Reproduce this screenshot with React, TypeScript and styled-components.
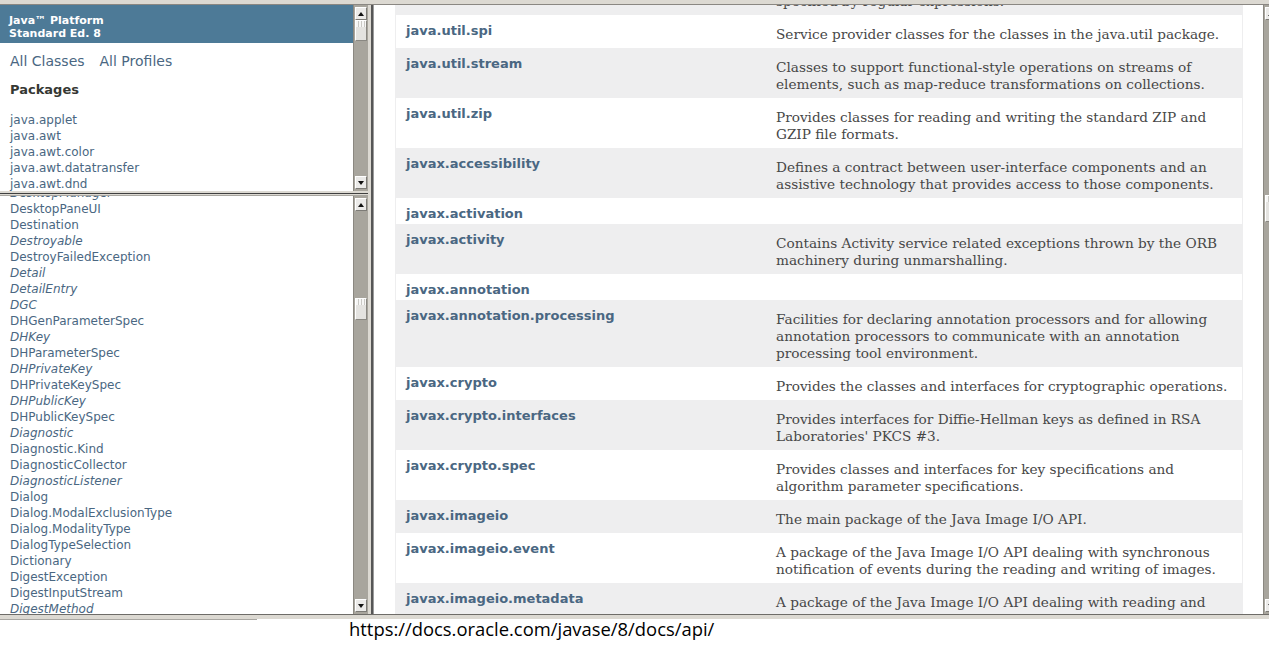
import React from "react";
import styled, { createGlobalStyle } from "styled-components";

const GlobalStyle = createGlobalStyle`
  html, body { margin: 0; padding: 0; background: #ffffff; }
  body { width: 1269px; height: 650px; overflow: hidden; font-family: "DejaVu Sans", sans-serif; }
  #root { width: 1269px; height: 650px; }
`;

const Page = styled.div`
  width: 1269px;
  height: 650px;
  overflow: hidden;
  background: #ffffff;
`;

const Window = styled.div`
  width: 1278px;
  display: flex;
  flex-direction: column;
  background: #dcd9d2;
`;

const TopEdge = styled.div`
  height: 5px;
  background: linear-gradient(to bottom, #dcd9d2 0 4px, #8a8782 4px 5px);
`;

const BottomEdge = styled.div`
  height: 5px;
  background: linear-gradient(to bottom, #6e6c68 0 1px, #dcd9d2 1px 5px);
`;

const Frames = styled.div`
  display: flex;
  height: 609px;
`;

const LeftColumn = styled.div`
  width: 368px;
  flex: none;
  display: flex;
  flex-direction: column;
`;

const Frame = styled.div<{ $h?: number }>`
  display: flex;
  min-height: 0;
  min-width: 0;
  background: #ffffff;
  ${(p) => (p.$h ? `height: ${p.$h}px; flex: none;` : `flex: 1;`)}
`;

const FrameBody = styled.div`
  flex: 1;
  min-width: 0;
  overflow: hidden;
`;

const HSplit = styled.div`
  height: 5px;
  flex: none;
  background: linear-gradient(
    to bottom,
    #dcd9d2 0 2px,
    #3f3f3f 2px 3px,
    #dcd9d2 3px 4px,
    #a8a6a0 4px 5px
  );
`;

const VSplit = styled.div`
  width: 6px;
  flex: none;
  background: linear-gradient(to right, #dcd9d2 0 3px, #565656 3px 5px, #9c9c9c 5px 6px);
`;

/* ---------- scrollbars ---------- */

const Track = styled.div`
  width: 15px;
  flex: none;
  box-sizing: border-box;
  display: flex;
  flex-direction: column;
  padding: 2px 1px;
  background: #a8a59d;
  border-left: 1px solid #8b8881;
`;

const ArrowButton = styled.div`
  height: 13px;
  flex: none;
  box-sizing: border-box;
  display: flex;
  align-items: center;
  justify-content: center;
  background: #ebeae8;
  border: 1px solid;
  border-color: #ffffff #7d7b76 #7d7b76 #ffffff;
`;

const Arrow = styled.span<{ $dir: "up" | "down" }>`
  width: 0;
  height: 0;
  border-left: 3px solid transparent;
  border-right: 3px solid transparent;
  ${(p) =>
    p.$dir === "up"
      ? `border-bottom: 4px solid #111;`
      : `border-top: 4px solid #111;`}
`;

const Thumb = styled.div<{ $offset: number; $size: number }>`
  flex: none;
  box-sizing: border-box;
  margin-top: ${(p) => p.$offset}px;
  height: ${(p) => p.$size}px;
  border: 1px solid;
  border-color: #ffffff #8a8882 #8a8882 #ffffff;
  background:
    repeating-linear-gradient(to right, #f6f6f5 0 2px, #c9c8c4 2px 3px) top / 100% 6px no-repeat,
    #e4e3e0;
`;

const TrackFill = styled.div`
  flex: 1;
`;

function Scrollbar({ offset, size }: { offset: number; size: number }) {
  return (
    <Track>
      <ArrowButton>
        <Arrow $dir="up" />
      </ArrowButton>
      <Thumb $offset={offset} $size={size} />
      <TrackFill />
      <ArrowButton>
        <Arrow $dir="down" />
      </ArrowButton>
    </Track>
  );
}

/* ---------- left frames ---------- */

const Bar = styled.div`
  background: #4d7a97;
  color: #ffffff;
  font-family: "DejaVu Sans", sans-serif;
  font-weight: bold;
  font-size: 11px;
  line-height: 13px;
  padding: 9px 5px 3px 9px;
`;

const IndexHeader = styled.div`
  margin: 10px 10px 0 10px;
  font-size: 14px;
  line-height: 17px;
  display: flex;
  gap: 15px;
`;

const Link = styled.a`
  color: #4a6782;
  text-decoration: none;
`;

const IndexTitle = styled.h2`
  margin: 12px 10px 0 10px;
  padding: 0 0 3px 0;
  font-size: 13px;
  line-height: 15px;
  font-weight: bold;
  color: #353833;
`;

const IndexList = styled.ul<{ $shift?: number }>`
  list-style: none;
  margin: ${(p) => (p.$shift !== undefined ? p.$shift : 11)}px 10px 0 10px;
  padding: 0;
  font-size: 12px;
  line-height: 14px;
`;

const IndexItem = styled.li<{ $italic?: boolean }>`
  padding-top: 2px;
  white-space: nowrap;
  font-style: ${(p) => (p.$italic ? "italic" : "normal")};
`;

const packages = [
  "java.applet",
  "java.awt",
  "java.awt.color",
  "java.awt.datatransfer",
  "java.awt.dnd",
  "java.awt.event",
];

const classes: [string, boolean][] = [
  ["DesktopManager", true],
  ["DesktopPaneUI", false],
  ["Destination", false],
  ["Destroyable", true],
  ["DestroyFailedException", false],
  ["Detail", true],
  ["DetailEntry", true],
  ["DGC", true],
  ["DHGenParameterSpec", false],
  ["DHKey", true],
  ["DHParameterSpec", false],
  ["DHPrivateKey", true],
  ["DHPrivateKeySpec", false],
  ["DHPublicKey", true],
  ["DHPublicKeySpec", false],
  ["Diagnostic", true],
  ["Diagnostic.Kind", false],
  ["DiagnosticCollector", false],
  ["DiagnosticListener", true],
  ["Dialog", false],
  ["Dialog.ModalExclusionType", false],
  ["Dialog.ModalityType", false],
  ["DialogTypeSelection", false],
  ["Dictionary", false],
  ["DigestException", false],
  ["DigestInputStream", false],
  ["DigestMethod", true],
  ["DigestOutputStream", false],
];

/* ---------- main frame ---------- */

const MainBody = styled.div`
  flex: 1;
  min-width: 0;
  overflow: hidden;
  padding: 0 20px 0 21px;
`;

const SummaryTable = styled.div`
  margin-top: -40px;
  border-left: 1px solid #eeeeef;
  border-right: 1px solid #eeeeef;
`;

const Row = styled.div<{ $alt: boolean }>`
  display: grid;
  grid-template-columns: 370px 1fr;
  background: ${(p) => (p.$alt ? "#eeeeef" : "#ffffff")};
`;

const NameCell = styled.div`
  padding: 8px 3px 3px 10px;
  font-family: "DejaVu Sans", sans-serif;
  font-size: 13px;
  line-height: 15px;
  font-weight: bold;
  white-space: nowrap;
`;

const DescCell = styled.div`
  padding: 8px 3px 3px 10px;
`;

const Block = styled.div`
  margin: 3px 10px 2px 0;
  font-family: "DejaVu Serif", Georgia, serif;
  font-size: 13.65px;
  line-height: 17px;
  color: #474747;
  white-space: nowrap;
`;

const rows: [string, string[]][] = [
  [
    "java.util.regex",
    [
      "Classes for matching character sequences against patterns",
      "specified by regular expressions.",
    ],
  ],
  ["java.util.spi", ["Service provider classes for the classes in the java.util package."]],
  [
    "java.util.stream",
    [
      "Classes to support functional-style operations on streams of",
      "elements, such as map-reduce transformations on collections.",
    ],
  ],
  [
    "java.util.zip",
    ["Provides classes for reading and writing the standard ZIP and", "GZIP file formats."],
  ],
  [
    "javax.accessibility",
    [
      "Defines a contract between user-interface components and an",
      "assistive technology that provides access to those components.",
    ],
  ],
  ["javax.activation", []],
  [
    "javax.activity",
    [
      "Contains Activity service related exceptions thrown by the ORB",
      "machinery during unmarshalling.",
    ],
  ],
  ["javax.annotation", []],
  [
    "javax.annotation.processing",
    [
      "Facilities for declaring annotation processors and for allowing",
      "annotation processors to communicate with an annotation",
      "processing tool environment.",
    ],
  ],
  ["javax.crypto", ["Provides the classes and interfaces for cryptographic operations."]],
  [
    "javax.crypto.interfaces",
    [
      "Provides interfaces for Diffie-Hellman keys as defined in RSA",
      "Laboratories' PKCS #3.",
    ],
  ],
  [
    "javax.crypto.spec",
    [
      "Provides classes and interfaces for key specifications and",
      "algorithm parameter specifications.",
    ],
  ],
  ["javax.imageio", ["The main package of the Java Image I/O API."]],
  [
    "javax.imageio.event",
    [
      "A package of the Java Image I/O API dealing with synchronous",
      "notification of events during the reading and writing of images.",
    ],
  ],
  [
    "javax.imageio.metadata",
    ["A package of the Java Image I/O API dealing with reading and", "writing metadata."],
  ],
];

/* ---------- footer ---------- */

const Footer = styled.div`
  display: flex;
  align-items: flex-start;
  background: #ffffff;
`;

const Rule = styled.div`
  width: 257px;
  height: 1px;
  flex: none;
  background: #a9a7a2;
`;

const Url = styled.div`
  margin-left: 92px;
  font-family: "Open Sans", "Noto Sans", sans-serif;
  font-size: 18.4px;
  line-height: 20px;
  color: #000000;
  white-space: nowrap;
`;

export default function App() {
  return (
    <Page>
      <GlobalStyle />
      <Window>
        <TopEdge />
        <Frames>
          <LeftColumn>
            <Frame $h={186}>
              <FrameBody>
                <Bar>
                  Java™ Platform
                  <br />
                  Standard&nbsp;Ed.&nbsp;8
                </Bar>
                <IndexHeader>
                  <Link href="#">All Classes</Link>
                  <Link href="#">All Profiles</Link>
                </IndexHeader>
                <IndexTitle>Packages</IndexTitle>
                <IndexList>
                  {packages.map((p) => (
                    <IndexItem key={p}>
                      <Link href="#">{p}</Link>
                    </IndexItem>
                  ))}
                </IndexList>
              </FrameBody>
              <Scrollbar offset={0} size={21} />
            </Frame>
            <HSplit />
            <Frame>
              <FrameBody>
                <IndexList $shift={-12}>
                  {classes.map(([name, italic]) => (
                    <IndexItem key={name} $italic={italic}>
                      <Link href="#">{name}</Link>
                    </IndexItem>
                  ))}
                </IndexList>
              </FrameBody>
              <Scrollbar offset={87} size={22} />
            </Frame>
          </LeftColumn>
          <VSplit />
          <Frame>
            <MainBody>
              <SummaryTable>
                {rows.map(([name, lines], i) => (
                  <Row key={name} $alt={i % 2 === 0}>
                    <NameCell>
                      <Link href="#">{name}</Link>
                    </NameCell>
                    <DescCell>
                      {lines.length > 0 && (
                        <Block>
                          {lines.map((l, j) => (
                            <React.Fragment key={j}>
                              {j > 0 && <br />}
                              {l}
                            </React.Fragment>
                          ))}
                        </Block>
                      )}
                    </DescCell>
                  </Row>
                ))}
              </SummaryTable>
            </MainBody>
            <Scrollbar offset={175} size={27} />
          </Frame>
        </Frames>
        <BottomEdge />
      </Window>
      <Footer>
        <Rule />
        <Url>https://docs.oracle.com/javase/8/docs/api/</Url>
      </Footer>
    </Page>
  );
}
